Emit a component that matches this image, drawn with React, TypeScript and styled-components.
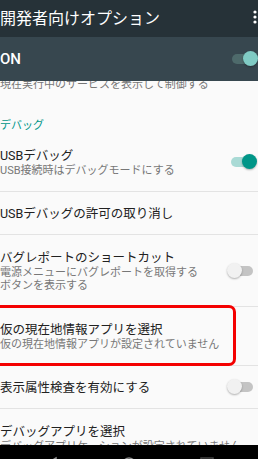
import { createGlobalStyle, styled } from 'styled-components';

const GlobalStyle = createGlobalStyle`
    html, body {
        margin: 0;
        padding: 0;
        background: #fafafa;
        overflow: hidden;
    }
    body {
        font-family: Roboto, "Noto Sans CJK JP", sans-serif;
    }
`;

const Screen = styled.div`
    width: 258px;
    height: 459px;
    display: flex;
    flex-direction: column;
    background: #fafafa;
    overflow: hidden;
`;

const AppBar = styled.header`
    height: 37px;
    flex: none;
    display: flex;
    align-items: center;
    justify-content: space-between;
    background: #263238;
    color: #fff;
`;

const AppTitle = styled.h1`
    margin: 0;
    font-size: 16px;
    font-weight: 400;
    line-height: 20px;
    white-space: nowrap;
`;

const OverflowIcon = styled.svg`
    margin: 0 1px 4px 0;
    flex: none;
`;

const MasterBar = styled.div`
    height: 44px;
    flex: none;
    display: flex;
    align-items: center;
    justify-content: space-between;
    background: #37474f;
    color: #fff;
`;

const MasterLabel = styled.span`
    font-size: 15px;
    font-weight: 500;
    line-height: 20px;
`;

const Content = styled.main`
    flex: 1;
    overflow: hidden;
`;

const Scrolled = styled.div`
    margin-top: -34.5px;
`;

const Category = styled.div`
    padding-top: 13.5px;
    font-size: 11px;
    line-height: 15px;
    color: #009688;
`;

const Row = styled.div<{ $single?: boolean; $divider?: boolean }>`
    position: relative;
    display: flex;
    align-items: center;
    gap: 22px;
    padding: ${p => p.$single ? '12.5px' : '14px'} 1px ${p => p.$single ? '12.5px' : '14px'} 0;
    border-bottom: ${p => p.$divider ? '1px solid #e3e3e3' : 'none'};
`;

const Texts = styled.div`
    flex: 1;
    min-width: 0;
`;

const Title = styled.div`
    font-size: 12.5px;
    line-height: 17px;
    color: #212121;
    white-space: nowrap;
`;

const Summary = styled.div`
    font-size: 11px;
    line-height: 13px;
    color: #777;
`;

const Highlight = styled.div`
    position: absolute;
    top: -2px;
    bottom: -1px;
    left: -10px;
    right: 22px;
    border: 3px solid #f40000;
    border-radius: 7px;
    pointer-events: none;
`;

const SwitchBox = styled.div`
    position: relative;
    width: 30px;
    height: 16px;
    flex: none;
`;

const Track = styled.div<{ $on: boolean; $dark?: boolean }>`
    position: absolute;
    left: 4px;
    right: 4px;
    top: 3px;
    height: 10px;
    border-radius: 5px;
    background: ${p => p.$dark ? '#4e6a6b' : p.$on ? '#a9dad5' : '#c4c4c4'};
`;

const Thumb = styled.div<{ $on: boolean; $dark?: boolean }>`
    position: absolute;
    top: 0;
    left: ${p => p.$on ? '15px' : '0'};
    width: 15px;
    height: 15px;
    border-radius: 50%;
    background: ${p => p.$dark ? '#80cbc4' : p.$on ? '#009688' : '#f1f1f1'};
    box-shadow: 0 1px 2px rgba(0, 0, 0, 0.3);
`;

const NavBar = styled.nav`
    height: 14px;
    flex: none;
    background: #000;
    display: flex;
    justify-content: center;
    gap: 62px;
    overflow: hidden;
`;

const NavIcon = styled.svg`
    margin-top: 11px;
    flex: none;
`;

type SwitchProps = { on: boolean; dark?: boolean };
const Switch = ({ on, dark }: SwitchProps) => <SwitchBox>
    <Track $on={on} $dark={dark} />
    <Thumb $on={on} $dark={dark} />
</SwitchBox>;

type PrefProps = {
    title: string;
    summary?: string[];
    toggle?: boolean;
    divider?: boolean;
    highlighted?: boolean;
};
const Pref = ({ title, summary, toggle, divider = true, highlighted }: PrefProps) => <Row $single={!summary} $divider={divider}>
    <Texts>
        <Title>{title}</Title>
        {summary?.map(line => <Summary key={line}>{line}</Summary>)}
    </Texts>
    {toggle !== undefined && <Switch on={toggle} />}
    {highlighted && <Highlight />}
</Row>;

export default function App() {
    return <Screen>
        <GlobalStyle />
        <AppBar>
            <AppTitle>開発者向けオプション</AppTitle>
            <OverflowIcon width="4" height="14" viewBox="0 0 4 14">
                <circle cx="2" cy="2" r="1.6" fill="#fff" />
                <circle cx="2" cy="7" r="1.6" fill="#fff" />
                <circle cx="2" cy="12" r="1.6" fill="#fff" />
            </OverflowIcon>
        </AppBar>
        <MasterBar>
            <MasterLabel>ON</MasterLabel>
            <Switch on dark />
        </MasterBar>
        <Content>
            <Scrolled>
                <Pref title="実行中のサービス" summary={['現在実行中のサービスを表示して制御する']} divider={false} />
                <Category>デバッグ</Category>
                <Pref title="USBデバッグ" summary={['USB接続時はデバッグモードにする']} toggle />
                <Pref title="USBデバッグの許可の取り消し" />
                <Pref
                    title="バグレポートのショートカット"
                    summary={['電源メニューにバグレポートを取得する', 'ボタンを表示する']}
                    toggle={false}
                />
                <Pref title="仮の現在地情報アプリを選択" summary={['仮の現在地情報アプリが設定されていません']} highlighted />
                <Pref title="表示属性検査を有効にする" toggle={false} />
                <Pref title="デバッグアプリを選択" summary={['デバッグアプリケーションが設定されていません']} divider={false} />
            </Scrolled>
        </Content>
        <NavBar>
            <NavIcon width="16" height="16" viewBox="0 0 16 16">
                <path d="M13 2 L3 8 L13 14 Z" fill="none" stroke="#8a8a8a" strokeWidth="1.5" />
            </NavIcon>
            <NavIcon width="16" height="16" viewBox="0 0 16 16">
                <circle cx="8" cy="8" r="6" fill="none" stroke="#8a8a8a" strokeWidth="1.5" />
            </NavIcon>
            <NavIcon width="16" height="16" viewBox="0 0 16 16">
                <rect x="2" y="2" width="12" height="12" fill="none" stroke="#444" strokeWidth="1.5" />
            </NavIcon>
        </NavBar>
    </Screen>;
}
